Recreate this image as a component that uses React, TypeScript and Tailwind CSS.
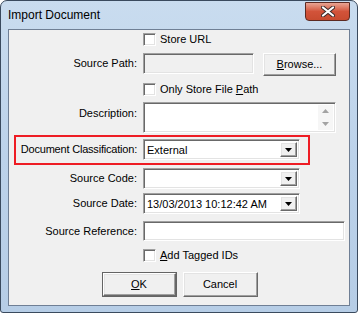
import React from "react";

const sunken =
  "border border-t-[#a0a0a0] border-l-[#a0a0a0] border-r-white border-b-white shadow-[inset_1px_1px_0_#696969,inset_-1px_-1px_0_#e3e3e3]";

const raised =
  "border border-t-white border-l-white border-r-[#696969] border-b-[#696969] shadow-[inset_-1px_-1px_0_#a0a0a0,inset_1px_1px_0_#e3e3e3] bg-[#f0f0f0]";

function Checkbox({ label }: { label: React.ReactNode }) {
  return (
    <div className="flex items-center h-[13px] ml-[134px]">
      <div className={`w-[13px] h-[13px] bg-white ${sunken}`} />
      <span className="ml-[4px] leading-[13px]">{label}</span>
    </div>
  );
}

function Label({ children, w = "w-[134px]" }: { children: React.ReactNode; w?: string }) {
  return <div className={`${w} shrink-0 text-right pr-[6px] whitespace-nowrap`}>{children}</div>;
}

function DropArrow() {
  return (
    <div className={`w-[17px] h-full flex items-center justify-center ${raised}`}>
      <svg width="7" height="4" viewBox="0 0 7 4">
        <path d="M0 0h7L3.5 4z" fill="#000" />
      </svg>
    </div>
  );
}

function Combo({ value, w = "w-[157px]" }: { value?: string; w?: string }) {
  return (
    <div className={`${w} h-[21px] bg-white flex items-stretch p-[2px] ${sunken}`}>
      <div className="flex-1 pl-[1px] leading-[17px]">{value}</div>
      <DropArrow />
    </div>
  );
}

export default function App() {
  return (
    <div
      className="w-[358px] h-[313px] rounded-t-[7px] rounded-b-[3px] border border-[#3a4a5e] bg-gradient-to-b from-[#c9dcef] via-[#bcd2ea] to-[#b6cde6] flex flex-col text-[11px] text-black"
      style={{ fontFamily: '"Liberation Sans", Arial, sans-serif' }}
    >
      {/* Title bar */}
      <div className="h-[28px] flex items-start shrink-0">
        <div className="pl-[7px] pt-[7px] text-[12px] leading-[14px]">Import Document</div>
        <div className="ml-auto mr-[7px] mt-[1px] w-[45px] h-[19px] rounded-b-[4px] border border-[#5c2a22] bg-gradient-to-b from-[#e8a493] via-[#d2533a] to-[#c84b30] flex items-center justify-center">
          <svg width="14" height="11" viewBox="0 0 14 11">
            <path
              d="M2 1.5L12 9.5M12 1.5L2 9.5"
              stroke="#3a2a2a"
              strokeWidth="4"
              strokeLinecap="round"
            />
            <path
              d="M2 1.5L12 9.5M12 1.5L2 9.5"
              stroke="#fff"
              strokeWidth="2.2"
              strokeLinecap="round"
            />
          </svg>
        </div>
      </div>

      {/* Client area */}
      <div className="mx-[7px] h-[277px] border border-[#6f7f95] bg-[#f0f0f0] flex flex-col">
        <div className="mt-[3px]">
          <Checkbox label="Store URL" />
        </div>

        <div className="mt-[7px] flex items-start h-[23px]">
          <Label>
            <div className="leading-[21px]">Source Path:</div>
          </Label>
          <div className={`w-[111px] h-[21px] bg-[#f0f0f0] ${sunken}`} />
          <div className={`ml-[9px] w-[73px] h-[23px] flex items-center justify-center ${raised}`}>
            <span>
              <span className="underline">B</span>rowse...
            </span>
          </div>
        </div>

        <div className="mt-[7px]">
          <Checkbox
            label={
              <>
                Only Store File <span className="underline">P</span>ath
              </>
            }
          />
        </div>

        <div className="mt-[6px] flex items-start">
          <Label>
            <div className="pt-[3px]">Description:</div>
          </Label>
          <div className={`w-[193px] h-[31px] bg-white flex justify-end p-[2px] ${sunken}`}>
            <div className="w-[15px] bg-[#f6f6f6] flex flex-col items-center justify-between py-[4px]">
              <svg width="7" height="4" viewBox="0 0 7 4">
                <path d="M0 4h7L3.5 0z" fill="#a3a3a3" />
              </svg>
              <svg width="7" height="4" viewBox="0 0 7 4">
                <path d="M0 0h7L3.5 4z" fill="#a3a3a3" />
              </svg>
            </div>
          </div>
        </div>

        <div className="mt-[2px] ml-[5px] w-[296px] h-[30px] border-2 border-[#ee1c24] flex items-start pt-[2px]">
          <Label w="w-[127px]">
            <div className="leading-[21px] tracking-[-0.2px]">Document Classification:</div>
          </Label>
          <Combo value="External" />
        </div>

        <div className="mt-[3px] flex items-center">
          <Label>Source Code:</Label>
          <Combo />
        </div>

        <div className="mt-[4px] flex items-center">
          <Label>Source Date:</Label>
          <Combo value="13/03/2013 10:12:42 AM" />
        </div>

        <div className="mt-[7px] flex items-center">
          <Label>Source Reference:</Label>
          <div className={`w-[202px] h-[20px] bg-white ${sunken}`} />
        </div>

        <div className="mt-[8px]">
          <Checkbox
            label={
              <>
                <span className="underline">A</span>dd Tagged IDs
              </>
            }
          />
        </div>

        <div className="mt-[10px] flex justify-center gap-[6px] pl-[1px]">
          <div className="w-[75px] h-[25px] border border-[#646464] flex">
            <div className={`flex-1 flex items-center justify-center ${raised}`}>
              <span>
                <span className="underline">O</span>K
              </span>
            </div>
          </div>
          <div className={`w-[75px] h-[25px] flex items-center justify-center ${raised}`}>
            Cancel
          </div>
        </div>
      </div>
    </div>
  );
}
